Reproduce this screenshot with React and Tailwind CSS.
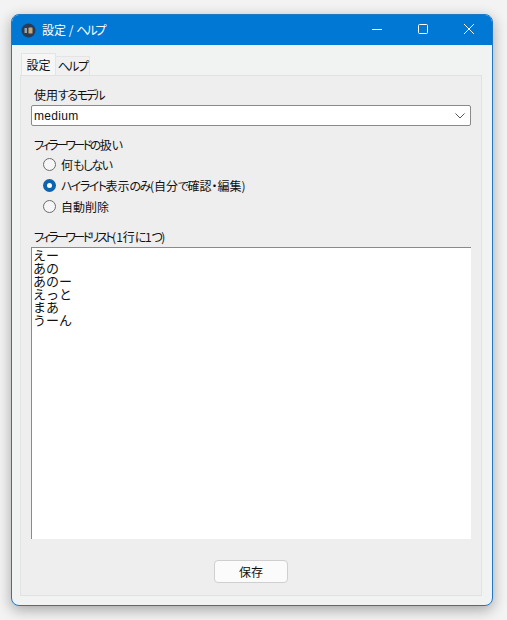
import React from "react";

const jp = "font-['Noto_Sans_CJK_JP','Liberation_Sans',sans-serif]";
const narrow = "[font-feature-settings:'palt']";

function Kana({ text, kata = "tracking-[-2.5px]" }) {
  const parts = text.match(/[\u30a0-\u30ff]+|[\u3040-\u309f]+|[^\u3040-\u30ff]+/g);
  return parts.map((p, i) => {
    let cls = "";
    if (/^[\u30a0-\u30ff]/.test(p) && p !== "・") cls = kata;
    else if (/^[\u3040-\u309f]/.test(p)) cls = "tracking-[-1.5px]";
    return (
      <span key={i} className={cls}>
        {p}
      </span>
    );
  });
}

function Radio({ label, checked, kata }) {
  return (
    <div className="flex h-[21px] items-center gap-[5px] pl-[12px]">
      {checked ? (
        <span className="flex h-[13px] w-[13px] items-center justify-center rounded-full bg-[#0f62ae]">
          <span className="h-[5px] w-[5px] rounded-full bg-white" />
        </span>
      ) : (
        <span className="h-[13px] w-[13px] rounded-full border border-[#6b6b6b] bg-[#f6f6f6]" />
      )}
      <span className={`whitespace-nowrap text-[12px] leading-[16px] text-[#111] ${narrow}`}>
        <Kana text={label} kata={kata} />
      </span>
    </div>
  );
}

export default function App() {
  return (
    <div className={`h-[620px] w-[507px] overflow-hidden bg-[#f3f3f3] pl-[11px] pt-[14px] ${jp}`}>
      <div className="flex h-[592px] w-[482px] flex-col overflow-hidden rounded-[8px] border border-[#1e78c4] bg-[#f1f2f2] shadow-[0_4px_14px_rgba(0,0,0,0.32)]">
        <div className="flex h-[30px] shrink-0 items-center bg-[#0078d4] pl-[9px] text-white">
          <svg width="15" height="15" viewBox="0 0 15 15" className="shrink-0">
            <circle cx="7.5" cy="7.5" r="7" fill="#2b3a55" />
            <rect x="3.5" y="5" width="2.5" height="5" fill="#8fa5a8" />
            <rect x="7.5" y="4.5" width="4" height="6" rx="0.5" fill="#c9a877" />
          </svg>
          <span className={`ml-[6px] whitespace-nowrap text-[12px] ${narrow}`}>
            <Kana text="設定 / ヘルプ" kata="tracking-[-2px]" />
          </span>
          <div className="ml-auto flex h-full items-center">
            <svg width="46" height="30" viewBox="0 0 46 30" fill="none" stroke="white">
              <path d="M18 14.5h10" />
            </svg>
            <svg width="46" height="30" viewBox="0 0 46 30" fill="none" stroke="white">
              <rect x="18.5" y="9.5" width="9" height="9" rx="1" />
            </svg>
            <svg width="46" height="30" viewBox="0 0 46 30" fill="none" stroke="white">
              <path d="M18 9l10 10M28 9L18 19" />
            </svg>
          </div>
        </div>

        <div className="flex min-h-0 flex-1 flex-col pb-[9px] pl-[8px] pr-[10px] pt-[8px]">
          <div className={`relative z-10 flex h-[22px] items-end pl-[1px] text-[12px] text-[#111] ${narrow}`}>
            <div className="flex h-[22px] w-[35px] items-center justify-center whitespace-nowrap border-x border-t border-[#e4e4e4] bg-[#f6f6f6]">設定</div>
            <div className="flex h-[19px] w-[34px] items-center justify-center whitespace-nowrap border-r border-t border-[#e4e4e4] bg-[#f0f0f0]">
              <Kana text="ヘルプ" kata="tracking-[-1.5px]" />
            </div>
          </div>
          <div className={`flex min-h-0 flex-1 flex-col border border-[#e2e2e2] bg-[#eeeeee] pl-[10px] pr-[10px] pt-[11px] ${narrow}`}>
            <div className="whitespace-nowrap pl-[3px] text-[12px] leading-[16px] text-[#111]">
              <Kana text="使用するモデル" />
            </div>
            <div className="mt-[2px] flex h-[21px] items-center rounded-[2px] border border-[#8a8a8a] bg-white pl-[2px] pr-[4px] font-['Liberation_Sans',sans-serif] text-[12px] text-[#111]">
              <span className="tracking-[0.3px]">medium</span>
              <svg width="10" height="6" viewBox="0 0 10 6" fill="none" stroke="#555" className="ml-auto mr-[1px]">
                <path d="M.5.5l4.5 4.5L9.5.5" />
              </svg>
            </div>
            <div className="mt-[11px] whitespace-nowrap pl-[3px] text-[12px] leading-[16px] text-[#111]">
              <Kana text="フィラーワードの扱い" />
            </div>
            <div className="mt-[1px] flex flex-col">
              <Radio label="何もしない" />
              <Radio label="ハイライト表示のみ(自分で確認・編集)" kata="tracking-[-1.5px]" checked />
              <Radio label="自動削除" />
            </div>
            <div className="mt-[12px] whitespace-nowrap pl-[3px] text-[12px] leading-[16px] text-[#111]">
              <Kana text="フィラーワードリスト(1行に1つ)" />
            </div>
            <div className="mt-[2px] h-[292px] w-full shrink-0 border-l border-t border-[#8a8a8a] bg-white pl-[1px] text-[13px] leading-[13px] text-[#111] [font-feature-settings:normal]">
              {["えー", "あの", "あのー", "えっと", "まあ", "うーん"].map((t) => (
                <div key={t}>{t}</div>
              ))}
            </div>
            <div className="flex flex-1 items-start justify-center pt-[21px]">
              <button className="h-[23px] w-[74px] rounded-[4px] border border-[#cfcfcf] bg-[#fbfbfb] text-[12px] text-[#111]">保存</button>
            </div>
          </div>
        </div>
      </div>
    </div>
  );
}
